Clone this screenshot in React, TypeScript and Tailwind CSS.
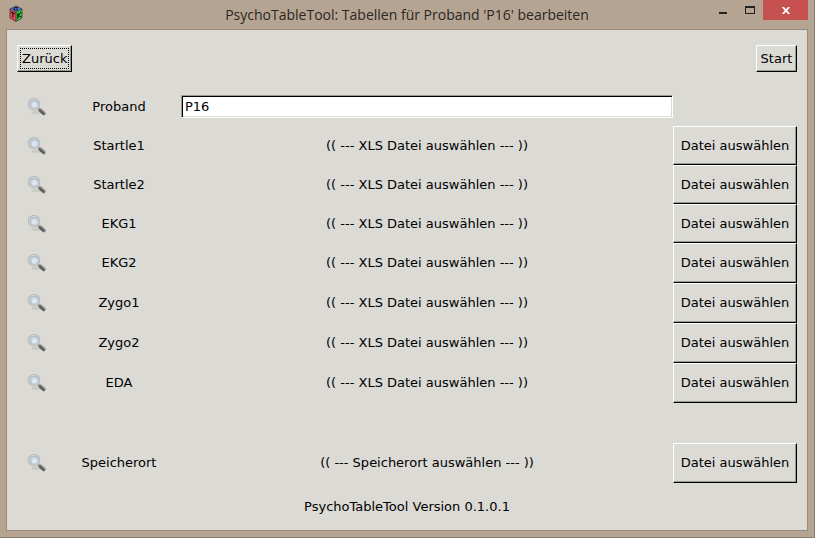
import { useState } from "react";
import { clsx } from "clsx";

const FILE_ROWS = [
  { id: "startle1", label: "Startle1", tall: false },
  { id: "startle2", label: "Startle2", tall: false },
  { id: "ekg1", label: "EKG1", tall: false },
  { id: "ekg2", label: "EKG2", tall: true },
  { id: "zygo1", label: "Zygo1", tall: true },
  { id: "zygo2", label: "Zygo2", tall: true },
  { id: "eda", label: "EDA", tall: true },
];

const RAISED =
  "border border-t-white border-l-white border-r-black border-b-black shadow-[inset_-1px_-1px_0_#9a9a8e] whitespace-nowrap";

function GtkLogo() {
  return (
    <svg viewBox="0 0 14 18" className="h-[18px] w-[14px]" aria-hidden="true">
      <path d="M7 1 13 4 7 7 1 4Z" fill="#4f80e6" />
      <path d="M1 4 7 7V16.5L1 13Z" fill="#ee4a50" />
      <path d="M13 4 7 7V16.5L13 13Z" fill="#2fd03a" />
      <path d="M7 1 13 4V13L7 16.5 1 13V4ZM1 4 7 7 13 4M7 7v9" fill="none" stroke="#33333c" strokeWidth="0.8" />
      <path d="M9 2.9Q7 1.7 5.3 3T6.7 5.2L8.8 4.4 7.4 3.8" fill="none" stroke="#111" strokeWidth="1" />
      <path
        d="M2 7 5.8 8.8M3.9 7.9V12.6M8.8 8.6V13.8M11.8 7 9 10.8 12 11.8"
        fill="none"
        stroke="#111"
        strokeWidth="1.1"
      />
    </svg>
  );
}

function Magnifier() {
  return (
    <svg viewBox="0 0 20 20" className="size-5" aria-hidden="true">
      <ellipse cx="10" cy="15.4" rx="5.5" ry="1.4" fill="#a9a8a3" opacity="0.35" />
      <path d="M11 11.6 13 13.4" stroke="#9a9a98" strokeWidth="2" />
      <path d="M13.2 13.2 16.8 16.4" stroke="#858585" strokeWidth="3.8" strokeLinecap="round" />
      <path d="M12.8 13.6 16.4 16.8" stroke="#555" strokeWidth="1.8" strokeLinecap="round" />
      <circle cx="7" cy="7.2" r="5.6" fill="#c3d0de" stroke="#b4b3b0" strokeWidth="1.2" />
      <circle cx="7" cy="7.2" r="4.8" fill="none" stroke="#e6e6e4" strokeWidth="1" />
      <circle cx="7" cy="7.2" r="4.1" fill="none" stroke="#98a9bb" strokeWidth="0.7" />
      <circle cx="7.6" cy="8" r="2.8" fill="#dde6ef" />
    </svg>
  );
}

function FileRow({ label, text, tall }: { label: string; text: string; tall: boolean }) {
  return (
    <div className={clsx("flex items-stretch", tall ? "h-10" : "h-[39px]")}>
      <span className="flex w-10 shrink-0 items-center justify-center">
        <Magnifier />
      </span>
      <span className="flex w-[124px] shrink-0 items-center justify-center">{label}</span>
      <span className="flex flex-1 items-center justify-center">{text}</span>
      <button type="button" aria-label={`${label}: Datei auswählen`} className={clsx(RAISED, "w-[124px] shrink-0")}>
        Datei auswählen
      </button>
    </div>
  );
}

export default function App() {
  const [proband, setProband] = useState("P16");

  return (
    <div className="flex min-h-screen flex-col border-r border-b border-[#8a7b6f] bg-[#b5a492] px-[6px] pb-[6px]">
      <header className="flex h-[29px] shrink-0 items-start">
        <div className="flex w-[100px] shrink-0 pt-[5px] pl-[3px]">
          <GtkLogo />
        </div>
        <h1 className="flex-1 pt-1 text-center font-['Open_Sans','Noto_Sans',sans-serif] text-[14px] leading-[22px] whitespace-nowrap text-[#2b2724]">
          PsychoTableTool: Tabellen für Proband 'P16' bearbeiten
        </h1>
        <div className="flex w-[100px] shrink-0 justify-end">
          <button type="button" aria-label="Minimieren" className="flex h-5 w-[27px] items-center justify-center">
            <svg viewBox="0 0 8 12" className="h-3 w-2">
              <path d="M0 8h8v2H0z" fill="#222" />
            </svg>
          </button>
          <button type="button" aria-label="Maximieren" className="flex h-5 w-[27px] items-center justify-center">
            <svg viewBox="0 0 10 8" className="h-2 w-[10px]">
              <path d="M0 0h10v8H0zM1 2v5h8V2z" fill="#222" fillRule="evenodd" />
            </svg>
          </button>
          <button type="button" aria-label="Schließen" className="flex h-5 w-[45px] items-center justify-center bg-[#c75050]">
            <svg viewBox="0 0 8 7" className="h-[7px] w-2">
              <path d="M0.7 0 7.3 7M7.3 0 0.7 7" stroke="#fff" strokeWidth="1.8" />
            </svg>
          </button>
        </div>
      </header>

      <main className="flex flex-1 flex-col border border-[#9c8b7b] bg-[#dbdad5] px-[10px] pt-[15px] font-['DejaVu_Sans',sans-serif] text-[13px] leading-4 text-black">
        <div className="mb-[15px] flex justify-between">
          <button type="button" className={clsx(RAISED, "h-[27px] p-[2px]")}>
            <span className="block border border-dotted border-black px-px leading-[19px]">Zurück</span>
          </button>
          <button type="button" className={clsx(RAISED, "h-[27px] w-[41px]")}>
            Start
          </button>
        </div>

        <div className="flex h-[39px] items-center">
          <span className="flex w-10 shrink-0 justify-center">
            <Magnifier />
          </span>
          <label htmlFor="proband" className="w-[124px] shrink-0 text-center">
            Proband
          </label>
          <input
            id="proband"
            type="text"
            value={proband}
            onChange={(e) => setProband(e.target.value)}
            className="h-[23px] min-w-0 flex-1 border border-t-[#9a9a8e] border-r-white border-b-white border-l-[#9a9a8e] bg-white px-[3px] shadow-[inset_1px_1px_0_#000,inset_-1px_-1px_0_#dbdad5] outline-none"
          />
          <span className="w-[124px] shrink-0" />
        </div>

        {FILE_ROWS.map((row) => (
          <FileRow key={row.id} label={row.label} text="(( --- XLS Datei auswählen --- ))" tall={row.tall} />
        ))}

        <div className="mt-10">
          <FileRow label="Speicherort" text="(( --- Speicherort auswählen --- ))" tall />
        </div>

        <footer className="flex flex-1 items-center justify-center">PsychoTableTool Version 0.1.0.1</footer>
      </main>
    </div>
  );
}
